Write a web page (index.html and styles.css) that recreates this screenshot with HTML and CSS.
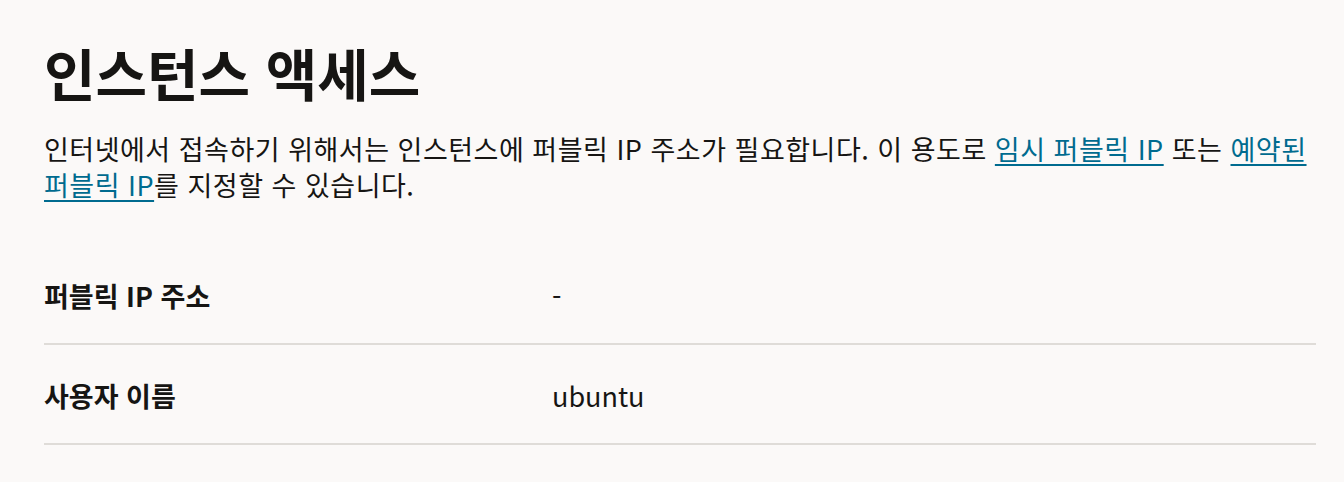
FILE: index.html
```html
<!DOCTYPE html>
<html lang="ko">
<head>
<meta charset="utf-8">
<link rel="stylesheet" href="styles.css">
</head>
<body>
<main class="page">
  <h1 class="title">인스턴스 액세스</h1>
  <p class="intro">인터넷에서 접속하기 위해서는 인스턴스에 퍼블릭 IP 주소가 필요합니다. 이 용도로 <a class="link" href="#">임시 퍼블릭 IP</a> 또는 <a class="link" href="#">예약된 퍼블릭 IP</a>를 지정할 수 있습니다.</p>
  <dl class="details">
    <div class="row">
      <dt class="label">퍼블릭 IP 주소</dt>
      <dd class="value">-</dd>
    </div>
    <div class="row">
      <dt class="label">사용자 이름</dt>
      <dd class="value">ubuntu</dd>
    </div>
  </dl>
</main>
</body>
</html>
```
FILE: styles.css
```css
html, body {
  margin: 0;
  padding: 0;
  background: #fbf9f8;
}
body {
  font-family: "Noto Sans CJK KR", "Noto Sans", sans-serif;
  color: #161513;
}
.page {
  padding: 36px 28px 0 44px;
}
.title {
  margin: 0;
  font-size: 56px;
  line-height: 72px;
  font-weight: 700;
}
.intro {
  margin: 23px 0 0;
  font-size: 27px;
  line-height: 36px;
  letter-spacing: 0.5px;
  font-weight: 400;
}
.link {
  color: #006b8f;
  text-decoration: underline;
  text-decoration-thickness: 2px;
  text-underline-offset: 4px;
}
.details {
  margin: 42px 0 0;
}
.row {
  display: grid;
  grid-template-columns: 508px 1fr;
  padding: 33px 0 29px;
  border-bottom: 2px solid #dfdcd8;
  font-size: 27px;
  line-height: 36px;
}
.label {
  margin: 0;
  font-weight: 700;
}
.value {
  margin: 0;
  font-weight: 400;
}
```
